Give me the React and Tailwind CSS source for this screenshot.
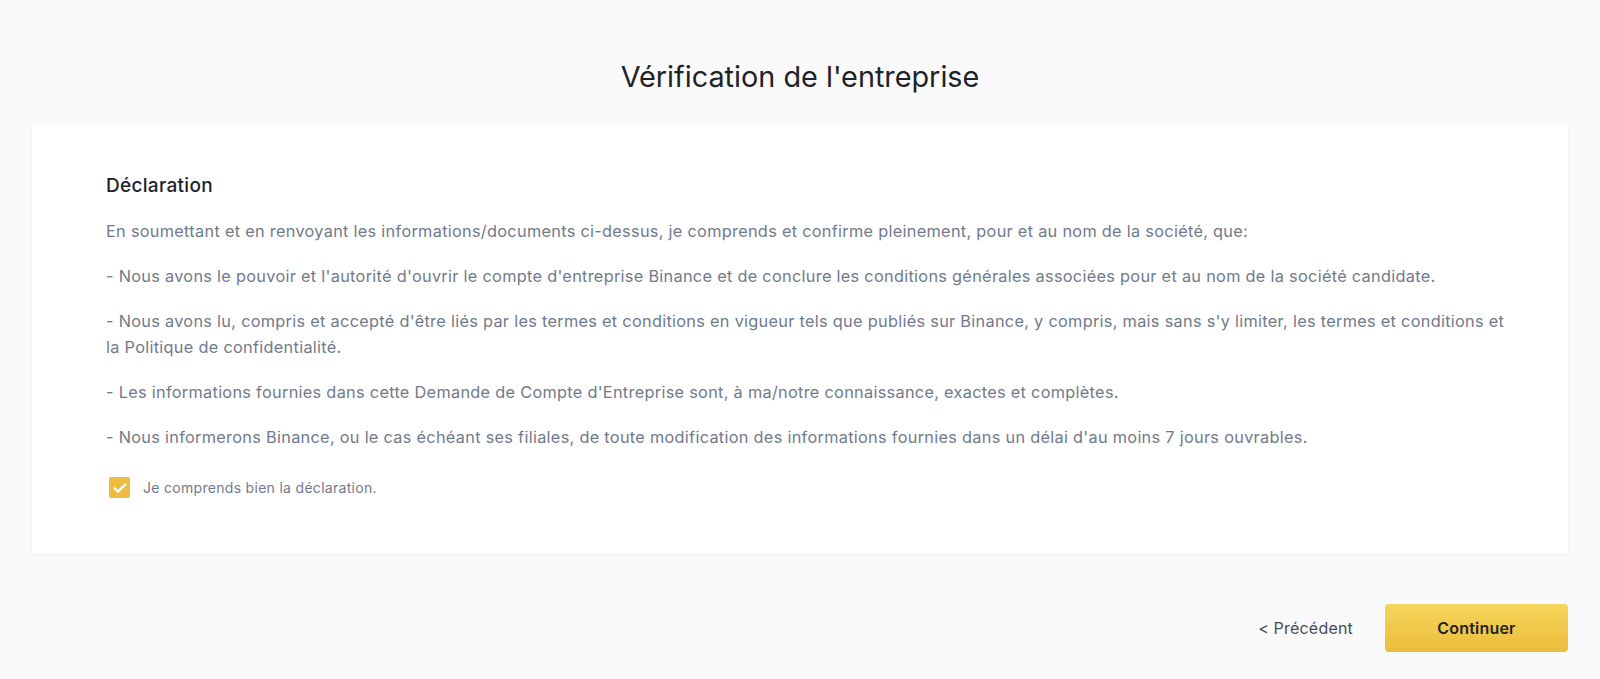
export default function App() {
  const paras = [
    "En soumettant et en renvoyant les informations/documents ci-dessus, je comprends et confirme pleinement, pour et au nom de la société, que:",
    "- Nous avons le pouvoir et l'autorité d'ouvrir le compte d'entreprise Binance et de conclure les conditions générales associées pour et au nom de la société candidate.",
    "- Nous avons lu, compris et accepté d'être liés par les termes et conditions en vigueur tels que publiés sur Binance, y compris, mais sans s'y limiter, les termes et conditions et la Politique de confidentialité.",
    "- Les informations fournies dans cette Demande de Compte d'Entreprise sont, à ma/notre connaissance, exactes et complètes.",
    "- Nous informerons Binance, ou le cas échéant ses filiales, de toute modification des informations fournies dans un délai d'au moins 7 jours ouvrables.",
  ];

  return (
    <div className="min-h-screen bg-[#fafafa] px-8 pt-[59px] font-['Inter','Liberation_Sans',sans-serif]">
      <h1 className="text-center text-[28.8px] leading-9 font-normal text-[#1e2329]">
        Vérification de l'entreprise
      </h1>

      <div className="mt-[29px] bg-white rounded-[2px] shadow-[0_1px_3px_rgba(0,0,0,0.07)] pl-[74px] pr-[56px] pt-[50px] pb-[56px]">
        <h2 className="text-[19px] leading-6 font-medium tracking-[0.3px] text-[#1e2329] mb-[20px]">Déclaration</h2>
        <div className="text-[16.3px] leading-[26px] tracking-[0.3px] text-[#707a8a]">
          {paras.map((p, i) => (
            <p key={i} className="mb-[19px]">{p}</p>
          ))}
        </div>
        <label className="flex items-center gap-[13px] pl-[3px] mt-[27px]">
          <span className="flex items-center justify-center w-[21px] h-[21px] rounded-[2px] bg-[#edbd3f]">
            <svg width="16" height="16" viewBox="0 0 24 24" fill="none" stroke="#fff" strokeWidth="3.4" strokeLinecap="round" strokeLinejoin="round">
              <path d="M4 12.5l5 5L20 6.5" />
            </svg>
          </span>
          <span className="text-[14px] tracking-[0.3px] text-[#707a8a]">Je comprends bien la déclaration.</span>
        </label>
      </div>

      <div className="flex justify-end items-center gap-8 mt-[50px]">
        <button className="text-[16px] tracking-[0.2px] text-[#474d57]">&lt; Précédent</button>
        <button className="w-[183px] h-[48px] rounded-[4px] bg-gradient-to-b from-[#f5d55a] to-[#ebbd3b] text-[16px] font-semibold tracking-[0.2px] text-[#1e2329]">
          Continuer
        </button>
      </div>
    </div>
  );
}
